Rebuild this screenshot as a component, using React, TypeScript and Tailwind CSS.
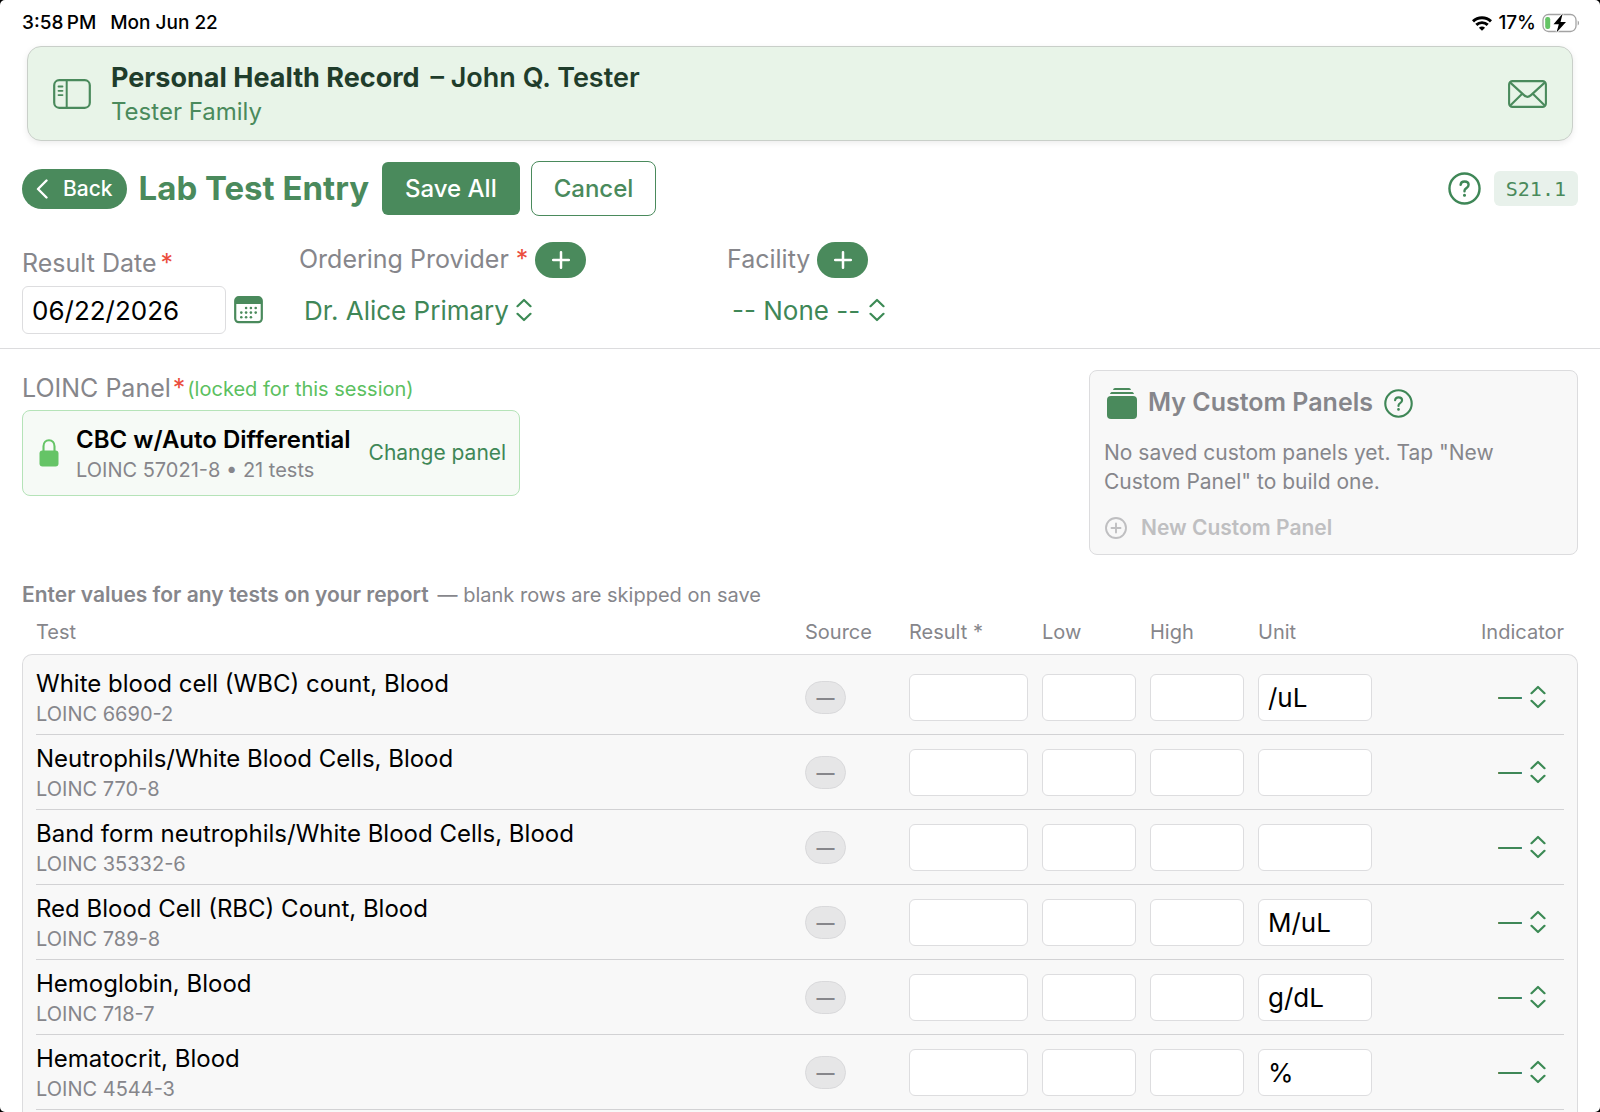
import { useState } from "react";

const tests = [
  { name: "White blood cell (WBC) count, Blood", loinc: "6690-2", unit: "/uL" },
  { name: "Neutrophils/White Blood Cells, Blood", loinc: "770-8", unit: "" },
  { name: "Band form neutrophils/White Blood Cells, Blood", loinc: "35332-6", unit: "" },
  { name: "Red Blood Cell (RBC) Count, Blood", loinc: "789-8", unit: "M/uL" },
  { name: "Hemoglobin, Blood", loinc: "718-7", unit: "g/dL" },
  { name: "Hematocrit, Blood", loinc: "4544-3", unit: "%" },
];

const rowGrid = "grid grid-cols-[1fr_90px_119px_94px_94px_114px_178px] gap-x-[14px]";
const field = "w-full rounded-md border border-[#dddddf] bg-white px-[9px] text-[26px] text-black outline-none";

function UpDown() {
  return (
    <svg
      className="pointer-events-none absolute right-0 top-1/2 -translate-y-1/2"
      width="16"
      height="24"
      viewBox="0 0 16 24"
      fill="none"
      stroke="#3c8a55"
      strokeWidth="2.2"
      strokeLinecap="round"
      strokeLinejoin="round"
      aria-hidden="true"
    >
      <path d="M1.5 8.2 8 2l6.5 6.2M1.5 15.8 8 22l6.5-6.2" />
    </svg>
  );
}

function HelpButton({ size, label }: { size: number; label: string }) {
  return (
    <button aria-label={label} className="shrink-0">
      <svg width={size} height={size} viewBox="0 0 34 34" fill="none" stroke="#3f8757" strokeLinecap="round" strokeLinejoin="round">
        <circle cx="17" cy="17" r="15.5" strokeWidth="2.5" />
        <path d="M13 13.2c.2-2.2 1.8-3.4 4.1-3.4 2.4 0 4.1 1.3 4.1 3.4 0 1.7-.8 2.6-2.2 3.4-1.4.8-2 1.5-2 2.8v.4" strokeWidth="2.5" />
        <circle cx="17" cy="24" r="0.9" strokeWidth="1.4" fill="#3f8757" />
      </svg>
    </button>
  );
}

function PlusButton({ label }: { label: string }) {
  return (
    <button aria-label={label} className="flex h-9 w-[51px] items-center justify-center rounded-full bg-[#4a8a5c]">
      <svg width="18" height="18" viewBox="0 0 18 18" stroke="white" strokeWidth="2.5" strokeLinecap="round" aria-hidden="true">
        <path d="M9 1.2v15.6M1.2 9h15.6" />
      </svg>
    </button>
  );
}

function StatusBar() {
  return (
    <div className="flex h-[46px] shrink-0 items-center justify-between pl-[22px] pr-5 text-[19px] font-medium text-black">
      <div className="flex gap-[14px]">
        <span>3:58{"\u2009"}PM</span>
        <span>Mon Jun 22</span>
      </div>
      <div className="flex items-center gap-[6px]">
        <svg width="20" height="15" viewBox="0 0 20 15" fill="none" stroke="black" aria-hidden="true">
          <path d="M1 5.4C6 .6 14 .6 19 5.4" strokeWidth="3" />
          <path d="M4.3 8.9c3.2-3.1 8.2-3.1 11.4 0" strokeWidth="2.9" />
          <path d="M10 14.8 6.9 11.7c1.7-1.6 4.5-1.6 6.2 0z" fill="black" stroke="none" />
        </svg>
        <span>17%</span>
        <svg width="38" height="20" viewBox="0 0 38 20" aria-hidden="true">
          <rect x="1" y="1.5" width="33" height="17" rx="5.5" fill="none" stroke="#a3a3a3" strokeWidth="1.3" />
          <path d="M35.7 7.5c1.8.8 1.8 4.2 0 5z" fill="#a3a3a3" />
          <rect x="3.2" y="4" width="5" height="12" rx="2.2" fill="#65c466" />
          <path d="M20.7.5 11.5 11.2h5.3l-2.3 8.3L24 8.9h-5.5z" fill="black" stroke="white" strokeWidth="1.8" paintOrder="stroke" />
        </svg>
      </div>
    </div>
  );
}

function Header() {
  return (
    <header className="mx-[27px] flex h-[95px] shrink-0 items-center rounded-[14px] border border-[#c9cfc9] bg-[#e8f4e8] px-[25px] shadow-[0_2px_6px_rgba(0,0,0,0.08)]">
      <button aria-label="Toggle sidebar">
        <svg width="38" height="30" viewBox="0 0 38 30" fill="none" stroke="#4a8a5c" strokeLinecap="round" aria-hidden="true">
          <rect x="1.2" y="1.2" width="35.6" height="27.6" rx="5" strokeWidth="2.2" />
          <path d="M13.7 1.5v27" strokeWidth="2" />
          <path d="M5.5 7.5h4M5.5 11.8h4M5.5 16.1h4" strokeWidth="1.8" />
        </svg>
      </button>
      <div className="ml-5 flex-1 pt-[2px]">
        <h1 className="text-[27px] font-semibold leading-[34px] text-[#1f3d2b]">
          <span className="mr-1 font-bold">Personal Health Record</span> – John Q. Tester
        </h1>
        <p className="text-[24px] leading-[34px] text-[#4a8a5c]">Tester Family</p>
      </div>
      <button aria-label="Messages">
        <svg width="39" height="28" viewBox="0 0 39 28" fill="none" stroke="#4a8a5c" strokeWidth="2.1" strokeLinejoin="round" aria-hidden="true">
          <rect x="1.1" y="1.1" width="36.8" height="25.8" rx="3.4" />
          <path d="m2 2.4 14.3 13c2 1.8 4.4 1.8 6.4 0L37 2.4M2 25.8l12.2-12M37 25.8l-12.2-12" />
        </svg>
      </button>
    </header>
  );
}

function Required() {
  return <span className="text-[#eb4d3d]">*</span>;
}

function EntryForm() {
  const [date, setDate] = useState("06/22/2026");

  return (
    <section className="flex h-[133px] shrink-0 border-b border-[#dcdcde] px-[22px] text-[25px] text-[#86868b]">
      <div className="w-[277px] pt-[30px]">
        <label htmlFor="date" className="flex h-9 items-center gap-1">
          Result Date<Required />
        </label>
        <div className="mt-1 flex items-center gap-2">
          <input id="date" value={date} onChange={(e) => setDate(e.target.value)} className="h-12 w-[204px] rounded-md border border-[#dddddf] px-[9px] text-[26px] text-black outline-none" />
          <button aria-label="Pick a date">
            <svg width="29" height="28" viewBox="0 0 29 28" fill="none" aria-hidden="true">
              <rect x="1.2" y="1.2" width="26.6" height="25" rx="3.6" stroke="#4a8a5c" strokeWidth="2.2" />
              <path d="M1.2 8V5c0-2.4 1.4-3.8 3.8-3.8h19c2.4 0 3.8 1.4 3.8 3.8v3z" fill="#4a8a5c" />
              <g fill="#4a8a5c">
                {[12, 16.6, 21.2].map((y, r) =>
                  [7.3, 12.1, 16.9, 21.7].map((x, c) =>
                    (r === 0 && c === 0) || (r === 2 && c === 3) ? null : <circle key={`${r}-${c}`} cx={x} cy={y} r="1.3" />
                  )
                )}
              </g>
            </svg>
          </button>
        </div>
      </div>

      <div className="w-[428px] pt-[26px]">
        <div className="flex h-9 items-center gap-[7px]">
          <label htmlFor="provider" className="flex gap-[7px]">
            Ordering Provider <Required />
          </label>
          <PlusButton label="Add provider" />
        </div>
        <div className="relative ml-[5px] mt-2 inline-block">
          <select id="provider" className="field-sizing-content h-12 appearance-none pr-[23px] text-[26px] text-[#3f8757] outline-none">
            <option>Dr. Alice Primary</option>
          </select>
          <UpDown />
        </div>
      </div>

      <div className="pt-[26px]">
        <div className="flex h-9 items-center gap-[7px]">
          <label htmlFor="facility">Facility</label>
          <PlusButton label="Add facility" />
        </div>
        <div className="relative ml-[5px] mt-2 inline-block">
          <select id="facility" className="field-sizing-content h-12 appearance-none pr-[25px] text-[26px] text-[#3f8757] outline-none">
            <option>-- None --</option>
          </select>
          <UpDown />
        </div>
      </div>
    </section>
  );
}

function LockedPanel() {
  return (
    <div>
      <div className="flex h-10 items-center gap-[2px] pb-[2px] text-[25px] text-[#86868b]">
        <span>LOINC Panel</span>
        <Required />
        <span className="text-[20px] text-[#5bc060]">(locked for this session)</span>
      </div>
      <div className="flex h-[86px] items-center rounded-lg border border-[#b5e3b8] bg-[#f6faf6] pl-4 pr-[13px]">
        <svg width="20" height="28" viewBox="0 0 20 28" className="shrink-0" aria-hidden="true">
          <rect x="0.5" y="11.5" width="19" height="16" rx="3" fill="#65c466" />
          <path d="M4.5 13V7.2c0-3.6 2.2-6 5.5-6s5.5 2.4 5.5 6V13" fill="none" stroke="#65c466" strokeWidth="2.1" />
        </svg>
        <div className="ml-[17px] pt-[3px]">
          <p className="text-[24px] font-semibold leading-[31px] text-black">CBC w/Auto Differential</p>
          <p className="text-[20px] leading-[30px] text-[#86868b]">LOINC 57021-8 • 21 tests</p>
        </div>
        <button className="ml-[18px] text-[21px] text-[#3f8757]">Change panel</button>
      </div>
    </div>
  );
}

function CustomPanels() {
  return (
    <aside className="h-[185px] w-[489px] rounded-lg border border-[#dcdcde] bg-[#f8f8f8] px-[14px] pt-[14px]">
      <div className="flex h-9 items-center pl-[3px]">
        <svg width="30" height="31" viewBox="0 0 30 31" fill="#4a8a5c" aria-hidden="true">
          <rect x="0" y="8" width="30" height="23" rx="4" />
          <path d="M3 6c.4-1.4 1.2-2 2.4-2h19.2c1.2 0 2 .6 2.4 2zM6 2C6.3.7 7 0 8 0h14c1 0 1.700.7 2 2z" />
        </svg>
        <h3 className="mx-[11px] text-[25px] font-semibold text-[#86868b]">My Custom Panels</h3>
        <HelpButton size={29} label="About custom panels" />
      </div>
      <p className="mt-[17px] text-[21px] leading-[29px] text-[#86868b]">
        No saved custom panels yet. Tap "New Custom Panel" to build one.
      </p>
      <button disabled className="mt-4 flex items-center gap-[14px] pl-px text-[21px] font-semibold leading-8 text-[#bfbfc1]">
        <svg width="22" height="22" viewBox="0 0 22 22" fill="none" stroke="#bfbfc1" strokeWidth="1.9" strokeLinecap="round" aria-hidden="true">
          <circle cx="11" cy="11" r="10" />
          <path d="M11 6.5v9M6.5 11h9" />
        </svg>
        New Custom Panel
      </button>
    </aside>
  );
}

function TestRow({ test }: { test: (typeof tests)[number] }) {
  const [unit, setUnit] = useState(test.unit);

  return (
    <tr className={`${rowGrid} h-[75px] items-center border-b border-[#d2d2d4]`}>
      <td className="pt-[3px]">
        <div className="text-[24px] leading-[31px] text-black">{test.name}</div>
        <div className="text-[20px] leading-[30px] text-[#86868b]">LOINC {test.loinc}</div>
      </td>
      <td>
        <span className="flex h-[33px] w-[41px] items-center justify-center rounded-full border border-[#d9d9db] bg-[#e6e6e7] text-[18px] font-semibold text-[#86868b]">—</span>
      </td>
      <td>
        <input aria-label={`${test.name} result`} className={`${field} h-[47px]`} />
      </td>
      <td>
        <input aria-label={`${test.name} low`} className={`${field} h-[47px]`} />
      </td>
      <td>
        <input aria-label={`${test.name} high`} className={`${field} h-[47px]`} />
      </td>
      <td>
        <input aria-label={`${test.name} unit`} value={unit} onChange={(e) => setUnit(e.target.value)} className={`${field} h-[47px]`} />
      </td>
      <td className="flex justify-end pr-[18px]">
        <div className="relative">
          <select aria-label={`${test.name} indicator`} className="field-sizing-content h-10 appearance-none pr-6 text-[24px] text-[#3f8757] outline-none">
            <option>—</option>
          </select>
          <UpDown />
        </div>
      </td>
    </tr>
  );
}

export default function App() {
  return (
    <div className="h-screen bg-black">
      <div className="flex h-full flex-col overflow-hidden rounded-[5px] bg-white font-['Inter',sans-serif]">
        <StatusBar />
        <Header />

        <div className="mt-5 flex h-[55px] shrink-0 items-center px-[22px]">
          <button className="flex h-10 items-center gap-[15px] rounded-full bg-[#4a8a5c] px-[14px] text-[21px] font-medium text-white">
            <svg width="12" height="20" viewBox="0 0 12 20" fill="none" stroke="white" strokeWidth="2.4" strokeLinecap="round" strokeLinejoin="round" aria-hidden="true">
              <path d="M10.5 1.5 2 10l8.5 8.5" />
            </svg>
            Back
          </button>
          <h2 className="ml-3 text-[33px] font-bold text-[#4a8a5c]">Lab Test Entry</h2>
          <button className="ml-[13px] h-[53px] rounded-md bg-[#4a8a5c] px-[23px] text-[24px] font-medium text-white">Save All</button>
          <button className="ml-[11px] h-[55px] rounded-lg border border-[#4a8a5c] bg-white px-[22px] text-[24px] font-medium text-[#4a8a5c]">Cancel</button>
          <div className="ml-auto flex items-center gap-[13px]">
            <HelpButton size={33} label="Help" />
            <span className="flex h-[35px] items-center rounded-md bg-[#e8f1eb] px-3 font-['DejaVu_Sans_Mono',monospace] text-[20px] text-[#4a8a5c]">S21.1</span>
          </div>
        </div>

        <EntryForm />

        <main className="flex min-h-0 flex-1 flex-col px-[22px] pt-[21px]">
          <div className="flex shrink-0 items-start justify-between">
            <LockedPanel />
            <CustomPanels />
          </div>

          <p className="mt-6 shrink-0 text-[20px] leading-8 text-[#86868b]">
            <strong className="mr-[9px] text-[21px] font-semibold">Enter values for any tests on your report</strong>
            — blank rows are skipped on save
          </p>

          <table className="flex min-h-0 flex-1 flex-col">
            <thead className="block px-[14px] pb-px text-[20px] text-[#86868b]">
              <tr className={`${rowGrid} h-[42px] items-center`}>
                <th className="text-left font-normal">Test</th>
                <th className="text-left font-normal">Source</th>
                <th className="text-left font-normal">Result *</th>
                <th className="text-left font-normal">Low</th>
                <th className="text-left font-normal">High</th>
                <th className="text-left font-normal">Unit</th>
                <th className="text-right font-normal">Indicator</th>
              </tr>
            </thead>
            <tbody className="block min-h-0 flex-1 overflow-hidden rounded-t-[10px] border border-b-0 border-[#dcdcde] bg-[#f8f8f8] px-[13px] pt-[5px]">
              {tests.map((t) => (
                <TestRow key={t.loinc} test={t} />
              ))}
            </tbody>
          </table>
        </main>
      </div>
    </div>
  );
}
